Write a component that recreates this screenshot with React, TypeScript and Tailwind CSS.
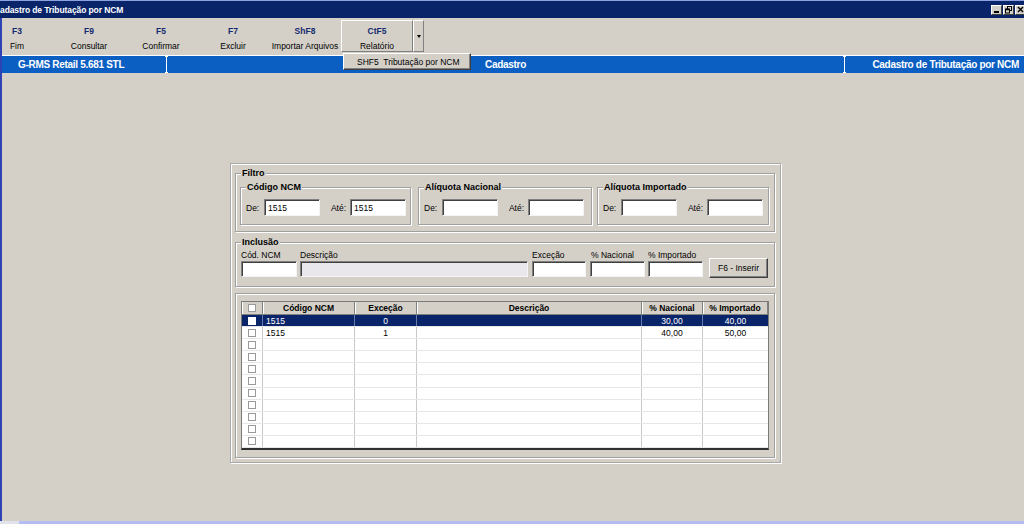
import React from 'react';

const keys = [
  { key: 'F3', label: 'Fim' },
  { key: 'F9', label: 'Consultar' },
  { key: 'F5', label: 'Confirmar' },
  { key: 'F7', label: 'Excluir' },
  { key: 'ShF8', label: 'Importar Arquivos' },
];

type Row = { sel?: boolean; ncm?: string; exc?: string; desc?: string; nac?: string; imp?: string };

const rows: Row[] = [
  { sel: true, ncm: '1515', exc: '0', desc: '', nac: '30,00', imp: '40,00' },
  { ncm: '1515', exc: '1', desc: '', nac: '40,00', imp: '50,00' },
  {}, {}, {}, {}, {}, {}, {}, {}, {},
];

// etched group box with caption sitting on the top line
const Group: React.FC<{ title: string; className?: string; children?: React.ReactNode }> = ({ title, className = '', children }) => (
  <div className={`relative border border-[#a0a0a0] shadow-[1px_1px_0_#fff,inset_1px_1px_0_#fff] ${className}`}>
    {title && (
      <span className="absolute left-[5px] -top-[6px] bg-[#d4d0c8] px-[1px] font-bold text-[9px] leading-[11px]">{title}</span>
    )}
    {children}
  </div>
);

const Field: React.FC<{ value?: string; className?: string; disabled?: boolean }> = ({ value = '', className = '', disabled }) => (
  <div
    className={`border border-t-[#808080] border-l-[#808080] border-r-[#f4f4f4] border-b-[#f4f4f4] shadow-[inset_1px_1px_0_#404040] pl-[3px] pt-[3px] leading-[10px] ${
      disabled ? 'bg-[#e9e7ec]' : 'bg-white'
    } ${className}`}
  >
    {value}
  </div>
);

const Range: React.FC<{ title: string; className?: string; de?: string; ate?: string }> = ({ title, className = '', de, ate }) => (
  <Group title={title} className={`h-[38px] ${className}`}>
    <div className="flex items-center mt-[11px] pl-[5px]">
      <span className="w-[18px]">De:</span>
      <Field value={de} className="w-[56px] h-[17px]" />
      <span className="w-[30px] text-right pr-[4px]">Até:</span>
      <Field value={ate} className="w-[56px] h-[17px]" />
    </div>
  </Group>
);

const Check: React.FC<{ filled?: boolean }> = ({ filled }) => (
  <div className={`w-[8px] h-[8px] ${filled ? 'bg-white' : 'border border-[#9a9a9a] bg-white'}`} />
);

const cols = ['w-[21px]', 'w-[92px]', 'w-[62px]', 'w-[225px]', 'w-[61px]', 'w-[65px]'];

function WinButtons() {
  return (
    <div className="flex gap-[1px] mr-[-2px]">
      <div className="w-[11px] h-[10px] bg-[#d4d0c8] border border-t-white border-l-white border-r-[#404040] border-b-[#404040] flex items-end justify-center pb-[1px]">
        <div className="w-[5px] h-[2px] bg-black" />
      </div>
      <div className="w-[11px] h-[10px] bg-[#d4d0c8] border border-t-white border-l-white border-r-[#404040] border-b-[#404040]">
        <svg width="9" height="8" viewBox="0 0 9 8">
          <rect x="3.5" y="0.5" width="4" height="4" fill="none" stroke="#000" />
          <rect x="1.5" y="3" width="4" height="4" fill="#d4d0c8" stroke="#000" />
          <line x1="1.5" y1="3.5" x2="5.5" y2="3.5" stroke="#000" strokeWidth="1.5" />
        </svg>
      </div>
      <div className="w-[11px] h-[10px] bg-[#d4d0c8] border border-t-white border-l-white border-r-[#404040] border-b-[#404040]">
        <svg width="9" height="8" viewBox="0 0 9 8">
          <path d="M2 1 L7 6 M7 1 L2 6" stroke="#000" strokeWidth="1.4" />
        </svg>
      </div>
    </div>
  );
}

export default function App() {
  return (
    <div className="relative w-[1024px] h-[524px] overflow-hidden bg-[#d4d0c8] flex flex-col font-['Liberation_Sans',Arial,sans-serif] text-[8.5px] leading-[10px] text-black">
      {/* Title bar */}
      <div className="h-[18px] shrink-0 bg-[#0a246a] border-t border-[#8ea2e0] flex items-center justify-between">
        <span className="text-white font-bold text-[8.5px] tracking-[-0.1px]">adastro de Tributação por NCM</span>
        <WinButtons />
      </div>

      <div className="flex-1 flex flex-col border-l-2 border-[#2f44b4]">
        {/* Function key toolbar */}
        <div className="h-[37px] shrink-0 flex items-start -ml-[21px]">
          {keys.map((k) => (
            <div key={k.key} className="w-[72px] h-[32px] mt-[2px] flex flex-col items-center pt-[6px]">
              <span className="font-bold text-[#142a6e]">{k.key}</span>
              <span className="mt-[5px]">{k.label}</span>
            </div>
          ))}
          <div className="w-[72px] h-[32px] mt-[2px] flex flex-col items-center pt-[5px] border border-t-white border-l-white border-r-[#808080] border-b-[#808080]">
            <span className="font-bold text-[#142a6e]">CtF5</span>
            <span className="mt-[5px]">Relatório</span>
          </div>
          <div className="w-[11px] h-[32px] mt-[2px] border border-t-white border-l-white border-r-[#808080] border-b-[#808080] flex items-center justify-center">
            <div className="w-0 h-0 border-l-[2px] border-r-[2px] border-t-[3px] border-l-transparent border-r-transparent border-t-black" />
          </div>
        </div>

        {/* Status band */}
        <div className="h-[18px] shrink-0 bg-[#0b5ec2] border-t border-white flex text-white font-bold text-[10px] tracking-[-0.3px]">
          <div className="w-[163px] flex items-center pl-[16px]">G-RMS Retail 5.681 STL</div>
          <div className="w-[3px] flex flex-col items-center">
            <div className="w-[3px] h-[1px] bg-white" />
            <div className="w-[1px] flex-1 bg-white" />
            <div className="w-[3px] h-[1px] bg-white" />
          </div>
          <div className="w-[675px] flex items-center justify-center">Cadastro</div>
          <div className="w-[3px] flex flex-col items-center">
            <div className="w-[3px] h-[1px] bg-white" />
            <div className="w-[1px] flex-1 bg-white" />
            <div className="w-[3px] h-[1px] bg-white" />
          </div>
          <div className="flex-1 flex items-center justify-end pr-[5px]">Cadastro de Tributação por NCM</div>
        </div>

        {/* Main area */}
        <div className="flex-1 pt-[90px] pl-[228px]">
          <div className="w-[551px] h-[300px] border border-[#a8a8a8] shadow-[inset_1px_1px_0_#fff,1px_1px_0_#fff] flex flex-col items-start pl-[4px]">
            <Group title="Filtro" className="w-[540px] h-[59px] mt-[9px]">
              <div className="flex mt-[13px] ml-[4px]">
                <Range title="Código NCM" className="w-[171px]" de="1515" ate="1515" />
                <Range title="Alíquota Nacional" className="w-[174px] ml-[7px]" />
                <Range title="Alíquota Importado" className="w-[172px] ml-[5px]" />
              </div>
            </Group>

            <Group title="Inclusão" className="w-[540px] h-[45px] mt-[10px]">
              <div className="flex items-start pt-[7px] pl-[5px]">
                <div className="w-[56px]">
                  <div className="h-[10px]">Cód. NCM</div>
                  <Field className="h-[16px] mt-[1px]" />
                </div>
                <div className="w-[228px] ml-[3px]">
                  <div className="h-[10px]">Descrição</div>
                  <Field className="h-[16px] mt-[1px]" disabled />
                </div>
                <div className="w-[54px] ml-[4px]">
                  <div className="h-[10px]">Exceção</div>
                  <Field className="h-[16px] mt-[1px]" />
                </div>
                <div className="w-[55px] ml-[4px]">
                  <div className="h-[10px] pl-[1px]">% Nacional</div>
                  <Field className="h-[16px] mt-[1px]" />
                </div>
                <div className="w-[55px] ml-[3px]">
                  <div className="h-[10px]">% Importado</div>
                  <Field className="h-[16px] mt-[1px]" />
                </div>
                <div className="w-[59px] h-[20px] ml-[6px] mt-[8px] border border-t-white border-l-white border-r-[#404040] border-b-[#404040] shadow-[inset_-1px_-1px_0_#808080] flex items-center justify-center">
                  F6 - Inserir
                </div>
              </div>
            </Group>

            <Group title="" className="w-[540px] h-[165px] mt-[6px]">
              <div className="ml-[5px] mt-[7px] w-[528px] h-[149px] border border-[#7a7a7a] border-b-2 border-b-[#303030] bg-white flex flex-col">
                {/* header */}
                <div className="h-[13px] flex bg-[#d4d0c8] font-bold border-b border-[#808080]">
                  {['', 'Código NCM', 'Exceção', 'Descrição', '% Nacional', '% Importado'].map((h, i) => (
                    <div
                      key={i}
                      className={`${cols[i]} flex items-center justify-center border-r border-[#808080] shadow-[inset_1px_0_0_#fff]`}
                    >
                      {i === 0 ? <Check /> : h}
                    </div>
                  ))}
                </div>
                {/* body */}
                <div className="flex-1 flex flex-col">
                  {rows.map((r, ri) => {
                    const line = r.sel ? 'border-[#6a7aa8]' : 'border-[#c8c8c8]';
                    return (
                      <div
                        key={ri}
                        className={`flex-1 flex border-b border-[#e6e6e6] ${r.sel ? 'bg-[#0a246a] text-white' : ''}`}
                      >
                        <div className={`${cols[0]} flex items-center justify-center border-r ${line}`}>
                          <Check filled={r.sel} />
                        </div>
                        <div className={`${cols[1]} flex items-center pl-[3px] border-r ${line}`}>{r.ncm}</div>
                        <div className={`${cols[2]} flex items-center justify-center border-r ${line}`}>{r.exc}</div>
                        <div className={`${cols[3]} flex items-center pl-[3px] border-r ${line}`}>{r.desc}</div>
                        <div className={`${cols[4]} flex items-center justify-center border-r ${line}`}>{r.nac}</div>
                        <div className={`${cols[5]} flex items-center justify-center`}>{r.imp}</div>
                      </div>
                    );
                  })}
                </div>
              </div>
            </Group>
          </div>
        </div>
      </div>

      {/* bottom edge */}
      <div className="h-[3px] shrink-0 flex">
        <div className="w-[19px] bg-[#e2e2ec]" />
        <div className="flex-1 bg-[#b3bdf1]" />
      </div>

      {/* open dropdown of CtF5 */}
      <div className="absolute left-[343px] top-[53px] w-[128px] h-[17px] bg-[#d4d0c8] border border-t-white border-l-white border-r-[#404040] border-b-[#404040] shadow-[inset_-1px_-1px_0_#808080] flex items-center pl-[13px] whitespace-pre">
        {'SHF5  Tributação por NCM'}
      </div>
    </div>
  );
}
